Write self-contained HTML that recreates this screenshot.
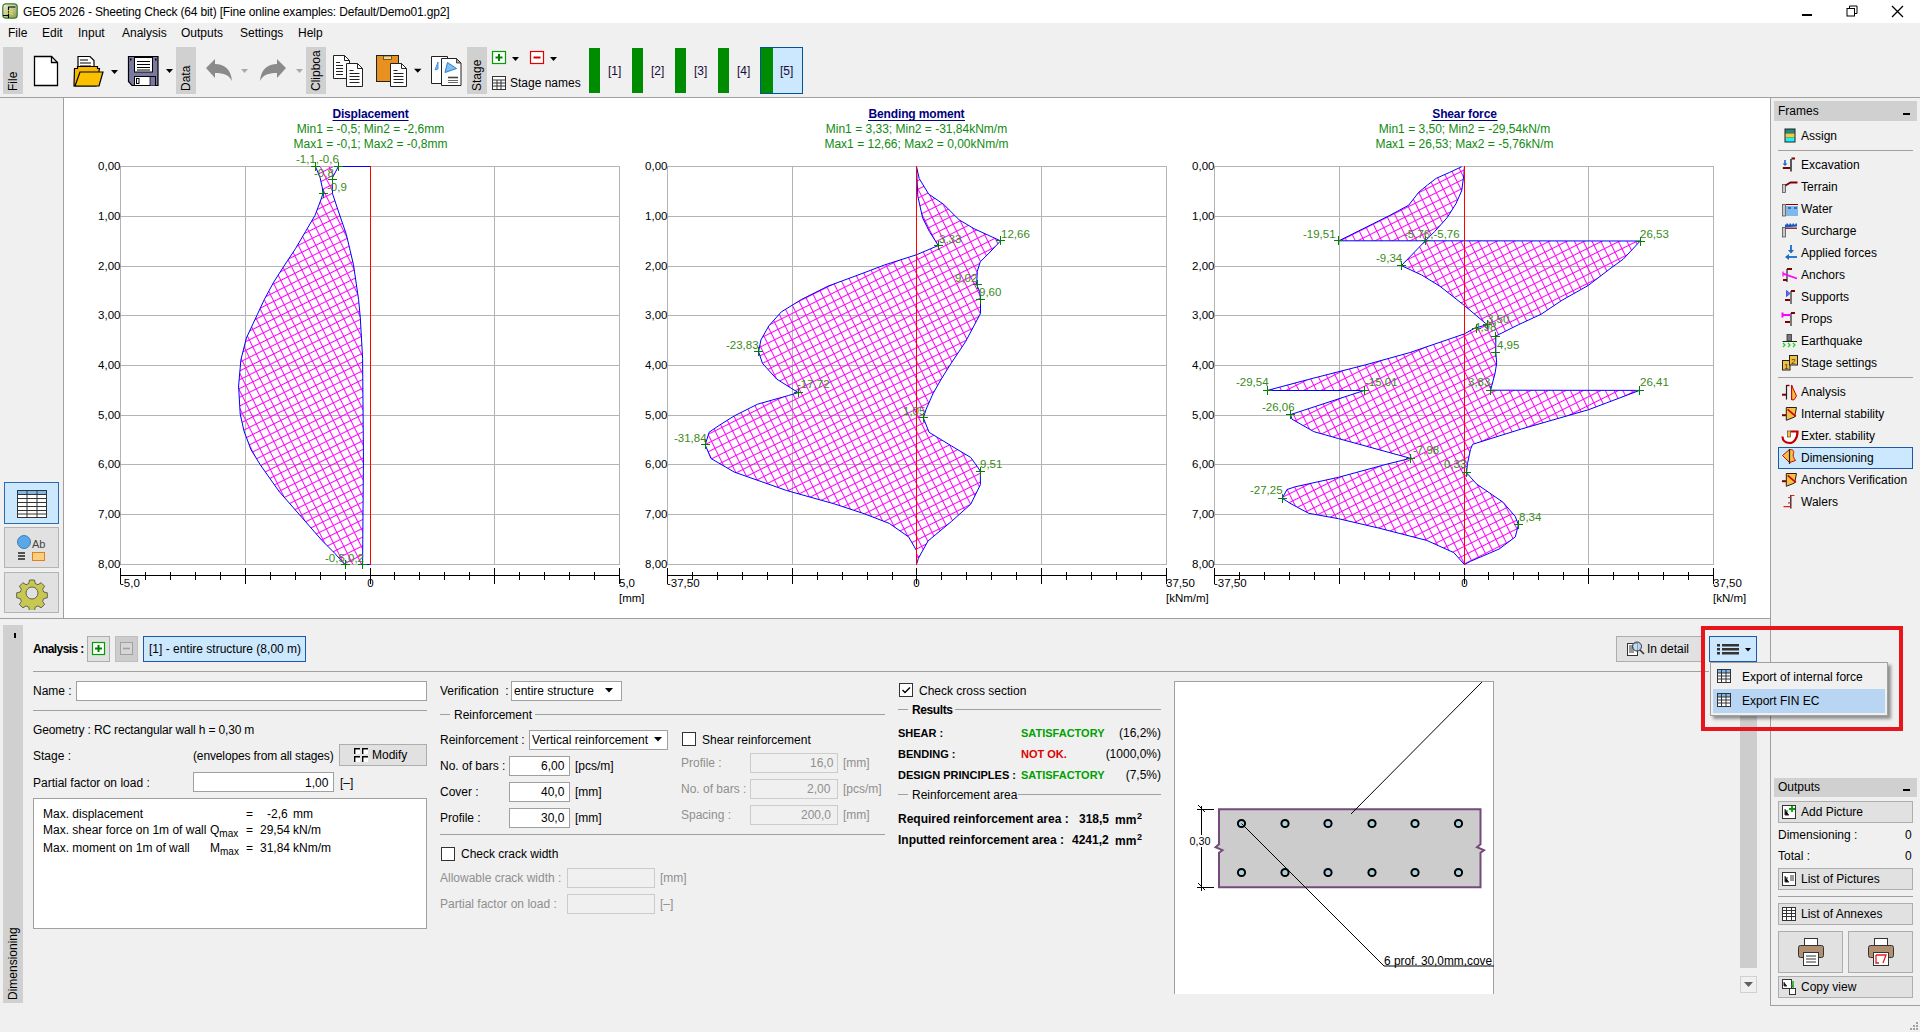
<!DOCTYPE html>
<html><head><meta charset="utf-8">
<style>
*{margin:0;padding:0;box-sizing:border-box}
html,body{width:1920px;height:1032px;overflow:hidden;background:#f0f0f0;font-family:"Liberation Sans",sans-serif;font-size:12px;color:#000}
.a{position:absolute}
.t{position:absolute;white-space:nowrap;line-height:14px}
.vt{position:absolute;background:#d0d0d0}
.vt span{position:absolute;left:3px;top:calc(100% - 3px);transform-origin:0 0;transform:rotate(-90deg);white-space:nowrap;font-size:12px;line-height:14px;width:auto}
.btn{position:absolute;background:#e1e1e1;border:1px solid #adadad}
.sel{position:absolute;background:#cce8ff;border:1px solid #005499}
.inp{position:absolute;background:#fff;border:1px solid #7a7a7a}
.dis{position:absolute;background:#f0f0f0;border:1px solid #cccccc}
.hl{position:absolute;height:1px;background:#a0a0a0}
.vl{position:absolute;width:1px;background:#a0a0a0}
.g{color:#8f8f8f}
.b{font-weight:bold}
</style></head><body>
<!-- title bar -->
<div class="a" style="left:0;top:0;width:1920px;height:23px;background:#fff"></div>
<svg class="a" style="left:2px;top:3px" width="16" height="16" viewBox="0 0 16 16"><defs><linearGradient id="lg" x1="0" y1="0" x2="1" y2="1"><stop offset="0" stop-color="#f4f4dc"/><stop offset="1" stop-color="#8a9a50"/></linearGradient></defs>
<rect x="0.8" y="0.8" width="14.4" height="14.4" rx="3" fill="url(#lg)" stroke="#3a7a2a" stroke-width="1.2"/>
<path d="M1 12.5h5.5M6.5 15v-11h7" stroke="#000" stroke-width="1.1" fill="none"/><path d="M5 8c2-1 4 0 6 1M5 10.5c2-1 4 0 6 1" stroke="#e8f020" stroke-width="1" fill="none"/></svg>
<div class="t" style="left:23px;top:5px;letter-spacing:-0.17px">GEO5 2026 - Sheeting Check (64 bit) [Fine online examples: Default/Demo01.gp2]</div>
<!-- menu -->
<div class="t" style="left:8px;top:26px">File</div>
<div class="t" style="left:42px;top:26px">Edit</div>
<div class="t" style="left:78px;top:26px">Input</div>
<div class="t" style="left:122px;top:26px">Analysis</div>
<div class="t" style="left:181px;top:26px">Outputs</div>
<div class="t" style="left:240px;top:26px">Settings</div>
<div class="t" style="left:298px;top:26px">Help</div>


<!-- toolbar -->
<div class="vt" style="left:3px;top:47px;width:20px;height:47px"><span>File</span></div>
<svg class="a" style="left:30px;top:52px" width="30" height="40" viewBox="0 0 30 40">
 <path d="M4.5 4.5h17l6 6v23h-23z" fill="#fff" stroke="#000" stroke-width="1.3"/><path d="M21.5 4.5v6h6" fill="none" stroke="#000" stroke-width="1.3"/></svg>
<svg class="a" style="left:72px;top:52px" width="50" height="40" viewBox="0 0 50 40">
 <path d="M6 4.5h12l4 4v16h-16z" fill="#fff" stroke="#000" stroke-width="1.2"/>
 <path d="M8 8h8M8 11h11M8 14h11" stroke="#000" stroke-width="1"/>
 <path d="M2.5 16.5h3v-2h20v2h2l-3.5 17.5h-22z" fill="#f8b800" stroke="#000" stroke-width="1.2"/>
 <path d="M3 34l5-14h23l-4 14z" fill="#fbc000" stroke="#000" stroke-width="1.2"/>
 <path d="M39 18h7l-3.5 4z" fill="#000"/></svg>
<svg class="a" style="left:126px;top:52px" width="50" height="40" viewBox="0 0 50 40">
 <path d="M2.5 4.5h29.5v29h-26l-3.5-4z" fill="#7a7aa0" stroke="#000" stroke-width="1.2"/>
 <rect x="4" y="6.5" width="1.5" height="2" fill="#000"/><rect x="29" y="6.5" width="1.5" height="2" fill="#000"/>
 <rect x="8.5" y="5.5" width="18" height="14.5" fill="#fff" stroke="#000" stroke-width="1"/>
 <path d="M11 9.5h13M11 12.5h13M11 15.5h13M11 18h13" stroke="#000" stroke-width="1"/>
 <rect x="8.5" y="24.5" width="21" height="9" fill="#fff" stroke="#000" stroke-width="1"/><rect x="10.5" y="26.5" width="2.5" height="5" fill="none" stroke="#000" stroke-width="1"/><rect x="24" y="25" width="5" height="8.5" fill="#7a7aa0"/><path d="M24 25v8.5" stroke="#000" stroke-width=".8"/>
 <path d="M40 17h7l-3.5 4z" fill="#000"/></svg>
<div class="vt" style="left:176px;top:47px;width:20px;height:47px"><span>Data</span></div>
<svg class="a" style="left:202px;top:55px" width="50" height="32" viewBox="0 0 50 32">
 <path d="M4 13l9-9v5c9 0 16 5 17 17-3-6-8-8-17-8v5z" fill="#8a8a8a"/>
 <path d="M39 14h7l-3.5 4z" fill="#aaa"/></svg>
<svg class="a" style="left:256px;top:55px" width="50" height="32" viewBox="0 0 50 32">
 <path d="M30 13l-9-9v5c-9 0-16 5-17 17 3-6 8-8 17-8v5z" fill="#8a8a8a"/>
 <path d="M40 14h7l-3.5 4z" fill="#aaa"/></svg>
<div class="vt" style="left:306px;top:47px;width:20px;height:47px"><span>Clipboa</span></div>
<svg class="a" style="left:330px;top:52px" width="36" height="40" viewBox="330 52 36 40">
 <path d="M333.5 55.5h11l5 5v18h-16z" fill="#fff" stroke="#222" stroke-width="1"/><path d="M344.5 55.5v5h5" fill="none" stroke="#222" stroke-width="1"/>
 <path d="M336 62.5h4M336 65.5h7M336 68.5h7M336 71.5h7M336 74.5h7" stroke="#222" stroke-width="1"/>
 <path d="M346.5 63.5h11l5 5v18h-16z" fill="#fff" stroke="#222" stroke-width="1"/><path d="M357.5 63.5v5h5" fill="none" stroke="#222" stroke-width="1"/>
 <path d="M349.5 70.5h4M349.5 73.5h10M349.5 76.5h10M349.5 79.5h10M349.5 82.5h10" stroke="#222" stroke-width="1"/></svg>
<svg class="a" style="left:374px;top:52px" width="50" height="40" viewBox="374 52 50 40">
 <rect x="376.5" y="55.5" width="22" height="26" fill="#e89020" stroke="#222" stroke-width="1"/><rect x="383.5" y="56" width="8" height="3.5" fill="#f8d880" stroke="#333" stroke-width=".7"/>
 <path d="M390.5 63.5h11l5 5v18h-16z" fill="#fff" stroke="#222" stroke-width="1"/><path d="M401.5 63.5v5h5" fill="none" stroke="#222" stroke-width="1"/>
 <path d="M393.5 70.5h4M393.5 73.5h10M393.5 76.5h10M393.5 79.5h10M393.5 82.5h10" stroke="#222" stroke-width="1"/>
 <path d="M414 68.8h7.5l-3.75 4z" fill="#000"/></svg>
<svg class="a" style="left:428px;top:52px" width="36" height="40" viewBox="428 52 36 40">
 <path d="M431.5 56.5h16v27h-16z" fill="#fff" stroke="#222" stroke-width="1"/><path d="M435 70l3-8v7z" fill="#80c0f0" stroke="#2a80d0" stroke-width=".8"/>
 <path d="M441.5 58.5h15l4.5 4.5v22.5h-19.5z" fill="#fff" stroke="#222" stroke-width="1"/><path d="M456.5 58.5v4.5h4.5z" fill="#aaa" stroke="#222" stroke-width=".8"/>
 <path d="M445 72.5l2.5-10 9 6z" fill="#80c0f0" stroke="#2a80d0" stroke-width="1"/>
 <path d="M448 77.5h10" stroke="#444" stroke-width="1.6"/><path d="M448 80.5h10M448 82.5h10" stroke="#444" stroke-width=".8"/></svg>
<div class="vt" style="left:467px;top:47px;width:20px;height:47px"><span>Stage</span></div>
<svg class="a" style="left:490px;top:49px" width="80" height="18" viewBox="0 0 80 18">
 <rect x="2.5" y="2.5" width="13" height="12" fill="#fff" stroke="#00a000" stroke-width="1.2"/><path d="M9 5v7M5.5 8.5h7" stroke="#008000" stroke-width="2"/>
 <path d="M22 8h7l-3.5 4z" fill="#000"/>
 <rect x="40.5" y="2.5" width="13" height="12" fill="#fff" stroke="#e00000" stroke-width="1.2"/><path d="M43.5 8.5h7" stroke="#d00000" stroke-width="2"/>
 <path d="M60 8h7l-3.5 4z" fill="#000"/></svg>
<svg class="a" style="left:491px;top:75px" width="16" height="16" viewBox="0 0 16 16">
 <rect x="1.5" y="1.5" width="13" height="13" fill="#fff" stroke="#333"/><path d="M1.5 5h13M1.5 8h13M1.5 11h13M6 5v9.5M10 5v9.5" stroke="#333"/></svg>
<div class="t" style="left:510px;top:76px">Stage names</div>
<div class="a" style="left:589px;top:48px;width:11px;height:45px;background:#008c00"></div>
<div class="t" style="left:608px;top:64px;color:#1a0a3a">[1]</div>
<div class="a" style="left:632px;top:48px;width:11px;height:45px;background:#008c00"></div>
<div class="t" style="left:651px;top:64px;color:#1a0a3a">[2]</div>
<div class="a" style="left:675px;top:48px;width:11px;height:45px;background:#008c00"></div>
<div class="t" style="left:694px;top:64px;color:#1a0a3a">[3]</div>
<div class="a" style="left:718px;top:48px;width:11px;height:45px;background:#008c00"></div>
<div class="t" style="left:737px;top:64px;color:#1a0a3a">[4]</div>
<div class="sel" style="left:760px;top:47px;width:43px;height:47px"></div>
<div class="a" style="left:761px;top:48px;width:12px;height:45px;background:#008c00"></div>
<div class="t" style="left:780px;top:64px;color:#1a0a3a">[5]</div>
<!-- window controls -->
<div class="a" style="left:1802px;top:14px;width:10px;height:2px;background:#000"></div>
<svg class="a" style="left:1846px;top:5px" width="12" height="12" viewBox="0 0 12 12"><path d="M3.5 3.5v-2.5h7.5v7.5h-2.5" fill="none" stroke="#000"/><rect x="1" y="3.5" width="7.5" height="7.5" fill="none" stroke="#000"/></svg>
<svg class="a" style="left:1891px;top:5px" width="13" height="13" viewBox="0 0 13 13"><path d="M1 1l11 11M12 1l-11 11" stroke="#000" stroke-width="1.3"/></svg>
<div class="hl" style="left:0;top:97px;width:1920px"></div>
<!-- left panel -->
<div class="vl" style="left:63px;top:98px;height:520px"></div>
<!-- chart area -->
<div class="a" style="left:64px;top:98px;width:1706px;height:520px;background:#fff"></div>
<!--CHARTS-->
<svg class="a" style="left:0;top:0" width="1920" height="620" viewBox="0 0 1920 620">
<defs>
<pattern id="hatch" patternUnits="userSpaceOnUse" width="7.83" height="7.83" patternTransform="rotate(-26.57)">
<path d="M0 0.5H7.83M0.5 0V7.83" stroke="#ff00ff" stroke-width="1" shape-rendering="crispEdges"/>
</pattern>
<style>
.yl{font-family:"Liberation Sans",sans-serif;font-size:11.5px;fill:#000}
.lb{font-family:"Liberation Sans",sans-serif;font-size:11.5px;fill:#3a8a1a}
.mm{font-family:"Liberation Sans",sans-serif;font-size:12px;fill:#108a10}
.tt{font-family:"Liberation Sans",sans-serif;font-size:12px;font-weight:bold;fill:#000080;letter-spacing:-0.15px}
</style>
</defs>
<line x1="120" y1="166.5" x2="620" y2="166.5" stroke="#b4b4b4" stroke-width="1"/>
<line x1="120" y1="216.5" x2="620" y2="216.5" stroke="#b4b4b4" stroke-width="1"/>
<line x1="120" y1="266.5" x2="620" y2="266.5" stroke="#b4b4b4" stroke-width="1"/>
<line x1="120" y1="315.5" x2="620" y2="315.5" stroke="#b4b4b4" stroke-width="1"/>
<line x1="120" y1="365.5" x2="620" y2="365.5" stroke="#b4b4b4" stroke-width="1"/>
<line x1="120" y1="415.5" x2="620" y2="415.5" stroke="#b4b4b4" stroke-width="1"/>
<line x1="120" y1="464.5" x2="620" y2="464.5" stroke="#b4b4b4" stroke-width="1"/>
<line x1="120" y1="514.5" x2="620" y2="514.5" stroke="#b4b4b4" stroke-width="1"/>
<line x1="120" y1="564.5" x2="620" y2="564.5" stroke="#b4b4b4" stroke-width="1"/>
<line x1="120.5" y1="166" x2="120.5" y2="565" stroke="#b4b4b4" stroke-width="1"/>
<line x1="245.5" y1="166" x2="245.5" y2="565" stroke="#b4b4b4" stroke-width="1"/>
<line x1="370.5" y1="166" x2="370.5" y2="565" stroke="#b4b4b4" stroke-width="1"/>
<line x1="494.5" y1="166" x2="494.5" y2="565" stroke="#b4b4b4" stroke-width="1"/>
<line x1="619.5" y1="166" x2="619.5" y2="565" stroke="#b4b4b4" stroke-width="1"/>
<text x="120.5" y="170" text-anchor="end" class="yl">0,00</text>
<text x="120.5" y="220" text-anchor="end" class="yl">1,00</text>
<text x="120.5" y="270" text-anchor="end" class="yl">2,00</text>
<text x="120.5" y="319" text-anchor="end" class="yl">3,00</text>
<text x="120.5" y="369" text-anchor="end" class="yl">4,00</text>
<text x="120.5" y="419" text-anchor="end" class="yl">5,00</text>
<text x="120.5" y="468" text-anchor="end" class="yl">6,00</text>
<text x="120.5" y="518" text-anchor="end" class="yl">7,00</text>
<text x="120.5" y="568" text-anchor="end" class="yl">8,00</text>
<polygon points="338.3,166.7 332.5,177.6 332.5,193.6 338.3,211.0 346.3,234.3 353.5,264.8 358.6,299.7 360.3,317.9 362.6,358.2 363.4,450.0 363.4,464.0 362.6,564.5 344.8,564.5 334.7,553.2 322.3,540.8 300.6,516.0 278.9,491.2 260.3,464.8 251.0,449.7 244.0,431.0 240.2,414.0 238.6,386.0 240.9,359.8 246.4,338.0 257.2,314.8 264.2,299.7 273.6,282.3 283.8,266.3 295.4,248.8 305.6,231.4 315.0,215.4 320.8,200.0 323.0,193.6 322.3,187.8 320.1,177.6 315.5,166.7" fill="url(#hatch)" stroke="none"/>
<polyline points="338.3,166.7 332.5,177.6 332.5,193.6 338.3,211.0 346.3,234.3 353.5,264.8 358.6,299.7 360.3,317.9 362.6,358.2 363.4,450.0 363.4,464.0 362.6,564.5" fill="none" stroke="#0000ff" stroke-width="1"/>
<polyline points="315.5,166.7 320.1,177.6 322.3,187.8 323.0,193.6 320.8,200.0 315.0,215.4 305.6,231.4 295.4,248.8 283.8,266.3 273.6,282.3 264.2,299.7 257.2,314.8 246.4,338.0 240.9,359.8 238.6,386.0 240.2,414.0 244.0,431.0 251.0,449.7 260.3,464.8 278.9,491.2 300.6,516.0 322.3,540.8 334.7,553.2 344.8,564.5" fill="none" stroke="#0000ff" stroke-width="1"/>
<polyline points="338.3,166.5 370.0,166.5" fill="none" stroke="#0000ff" stroke-width="1"/>
<polyline points="362.6,564.5 370.0,564.5" fill="none" stroke="#0000ff" stroke-width="1"/>
<line x1="370.5" y1="166" x2="370.5" y2="565" stroke="#ff0000" stroke-width="1"/>
<path d="M311 166.5h9M315.5 162v9" stroke="#008000" stroke-width="1"/>
<path d="M334 166.5h9M338.5 162v9" stroke="#008000" stroke-width="1"/>
<path d="M328 179.5h9M332.5 175v9" stroke="#008000" stroke-width="1"/>
<path d="M319 193.5h9M323.5 189v9" stroke="#008000" stroke-width="1"/>
<path d="M341 564.5h9M345.5 560v9" stroke="#008000" stroke-width="1"/>
<path d="M358 564.5h9M362.5 560v9" stroke="#008000" stroke-width="1"/>
<text x="296" y="163" class="lb">-1,1,-0,6</text>
<text x="314" y="177" class="lb">-0,8</text>
<text x="327" y="191" class="lb">-0,9</text>
<text x="325" y="562" class="lb">-0,5,0,2</text>
<line x1="120" y1="575.5" x2="620" y2="575.5" stroke="#000" stroke-width="1"/>
<line x1="120.5" y1="568" x2="120.5" y2="584" stroke="#000" stroke-width="1"/>
<line x1="145.5" y1="572" x2="145.5" y2="580" stroke="#000" stroke-width="1"/>
<line x1="170.5" y1="572" x2="170.5" y2="580" stroke="#000" stroke-width="1"/>
<line x1="195.5" y1="572" x2="195.5" y2="580" stroke="#000" stroke-width="1"/>
<line x1="220.5" y1="572" x2="220.5" y2="580" stroke="#000" stroke-width="1"/>
<line x1="245.5" y1="568" x2="245.5" y2="584" stroke="#000" stroke-width="1"/>
<line x1="270.5" y1="572" x2="270.5" y2="580" stroke="#000" stroke-width="1"/>
<line x1="295.5" y1="572" x2="295.5" y2="580" stroke="#000" stroke-width="1"/>
<line x1="320.5" y1="572" x2="320.5" y2="580" stroke="#000" stroke-width="1"/>
<line x1="345.5" y1="572" x2="345.5" y2="580" stroke="#000" stroke-width="1"/>
<line x1="370.5" y1="568" x2="370.5" y2="584" stroke="#000" stroke-width="1"/>
<line x1="394.5" y1="572" x2="394.5" y2="580" stroke="#000" stroke-width="1"/>
<line x1="419.5" y1="572" x2="419.5" y2="580" stroke="#000" stroke-width="1"/>
<line x1="444.5" y1="572" x2="444.5" y2="580" stroke="#000" stroke-width="1"/>
<line x1="469.5" y1="572" x2="469.5" y2="580" stroke="#000" stroke-width="1"/>
<line x1="494.5" y1="568" x2="494.5" y2="584" stroke="#000" stroke-width="1"/>
<line x1="519.5" y1="572" x2="519.5" y2="580" stroke="#000" stroke-width="1"/>
<line x1="544.5" y1="572" x2="544.5" y2="580" stroke="#000" stroke-width="1"/>
<line x1="569.5" y1="572" x2="569.5" y2="580" stroke="#000" stroke-width="1"/>
<line x1="594.5" y1="572" x2="594.5" y2="580" stroke="#000" stroke-width="1"/>
<line x1="619.5" y1="568" x2="619.5" y2="584" stroke="#000" stroke-width="1"/>
<text x="120" y="586.5" class="yl">-5,0</text>
<text x="370.5" y="586.5" text-anchor="middle" class="yl">0</text>
<text x="619" y="586.5" class="yl">5,0</text>
<text x="619" y="601.5" class="yl">[mm]</text>
<text x="370.5" y="118" text-anchor="middle" class="tt">Displacement</text>
<line x1="332.5" y1="120.5" x2="408.5" y2="120.5" stroke="#000080" stroke-width="1"/>
<text x="370.5" y="133" text-anchor="middle" class="mm">Min1 = -0,5; Min2 = -2,6mm</text>
<text x="370.5" y="148" text-anchor="middle" class="mm">Max1 = -0,1; Max2 = -0,8mm</text>
<line x1="667" y1="166.5" x2="1167" y2="166.5" stroke="#b4b4b4" stroke-width="1"/>
<line x1="667" y1="216.5" x2="1167" y2="216.5" stroke="#b4b4b4" stroke-width="1"/>
<line x1="667" y1="266.5" x2="1167" y2="266.5" stroke="#b4b4b4" stroke-width="1"/>
<line x1="667" y1="315.5" x2="1167" y2="315.5" stroke="#b4b4b4" stroke-width="1"/>
<line x1="667" y1="365.5" x2="1167" y2="365.5" stroke="#b4b4b4" stroke-width="1"/>
<line x1="667" y1="415.5" x2="1167" y2="415.5" stroke="#b4b4b4" stroke-width="1"/>
<line x1="667" y1="464.5" x2="1167" y2="464.5" stroke="#b4b4b4" stroke-width="1"/>
<line x1="667" y1="514.5" x2="1167" y2="514.5" stroke="#b4b4b4" stroke-width="1"/>
<line x1="667" y1="564.5" x2="1167" y2="564.5" stroke="#b4b4b4" stroke-width="1"/>
<line x1="667.5" y1="166" x2="667.5" y2="565" stroke="#b4b4b4" stroke-width="1"/>
<line x1="792.5" y1="166" x2="792.5" y2="565" stroke="#b4b4b4" stroke-width="1"/>
<line x1="916.5" y1="166" x2="916.5" y2="565" stroke="#b4b4b4" stroke-width="1"/>
<line x1="1041.5" y1="166" x2="1041.5" y2="565" stroke="#b4b4b4" stroke-width="1"/>
<line x1="1166.5" y1="166" x2="1166.5" y2="565" stroke="#b4b4b4" stroke-width="1"/>
<text x="667.5" y="170" text-anchor="end" class="yl">0,00</text>
<text x="667.5" y="220" text-anchor="end" class="yl">1,00</text>
<text x="667.5" y="270" text-anchor="end" class="yl">2,00</text>
<text x="667.5" y="319" text-anchor="end" class="yl">3,00</text>
<text x="667.5" y="369" text-anchor="end" class="yl">4,00</text>
<text x="667.5" y="419" text-anchor="end" class="yl">5,00</text>
<text x="667.5" y="468" text-anchor="end" class="yl">6,00</text>
<text x="667.5" y="518" text-anchor="end" class="yl">7,00</text>
<text x="667.5" y="568" text-anchor="end" class="yl">8,00</text>
<polygon points="916.5,166.6 919.2,178.5 928.7,194.1 943.6,204.3 959.2,219.9 974.1,228.7 1000.6,240.9 989.0,253.1 980.2,261.9 977.3,271.3 976.6,284.5 979.7,291.6 980.5,299.4 980.5,313.4 965.6,341.6 950.0,365.0 940.7,380.0 933.0,393.6 926.2,409.1 923.3,417.8 929.1,432.3 951.4,445.9 970.8,457.5 980.4,471.1 980.4,484.7 970.8,504.1 951.4,521.5 928.1,540.9 918.4,558.3 916.5,564.5 916.5,564.5 916.5,550.6 908.7,537.0 889.3,523.4 864.1,513.7 835.1,504.1 786.6,490.5 734.3,472.1 711.0,458.5 705.2,444.9 709.1,432.3 718.8,425.6 734.3,415.9 757.5,404.2 788.5,395.5 798.2,392.6 776.6,379.0 762.5,363.4 758.6,351.7 760.9,340.0 768.8,325.9 781.3,311.9 801.6,299.4 828.1,286.1 864.0,272.8 884.4,265.0 916.4,254.8 938.3,245.5 929.3,231.4 922.6,217.8 917.8,196.1 916.5,166.6" fill="url(#hatch)" stroke="none"/>
<polyline points="916.5,166.6 919.2,178.5 928.7,194.1 943.6,204.3 959.2,219.9 974.1,228.7 1000.6,240.9 989.0,253.1 980.2,261.9 977.3,271.3 976.6,284.5 979.7,291.6 980.5,299.4 980.5,313.4 965.6,341.6 950.0,365.0 940.7,380.0 933.0,393.6 926.2,409.1 923.3,417.8 929.1,432.3 951.4,445.9 970.8,457.5 980.4,471.1 980.4,484.7 970.8,504.1 951.4,521.5 928.1,540.9 918.4,558.3 916.5,564.5" fill="none" stroke="#0000ff" stroke-width="1"/>
<polyline points="916.5,166.6 917.8,196.1 922.6,217.8 929.3,231.4 938.3,245.5 916.4,254.8 884.4,265.0 864.0,272.8 828.1,286.1 801.6,299.4 781.3,311.9 768.8,325.9 760.9,340.0 758.6,351.7 762.5,363.4 776.6,379.0 798.2,392.6 788.5,395.5 757.5,404.2 734.3,415.9 718.8,425.6 709.1,432.3 705.2,444.9 711.0,458.5 734.3,472.1 786.6,490.5 835.1,504.1 864.1,513.7 889.3,523.4 908.7,537.0 916.5,550.6 916.5,564.5" fill="none" stroke="#0000ff" stroke-width="1"/>
<line x1="916.5" y1="166" x2="916.5" y2="565" stroke="#ff0000" stroke-width="1"/>
<path d="M996 240.5h9M1000.5 236v9" stroke="#008000" stroke-width="1"/>
<path d="M934 245.5h9M938.5 241v9" stroke="#008000" stroke-width="1"/>
<path d="M973 284.5h9M977.5 280v9" stroke="#008000" stroke-width="1"/>
<path d="M976 299.5h9M980.5 295v9" stroke="#008000" stroke-width="1"/>
<path d="M754 351.5h9M758.5 347v9" stroke="#008000" stroke-width="1"/>
<path d="M794 392.5h9M798.5 388v9" stroke="#008000" stroke-width="1"/>
<path d="M919 417.5h9M923.5 413v9" stroke="#008000" stroke-width="1"/>
<path d="M701 444.5h9M705.5 440v9" stroke="#008000" stroke-width="1"/>
<path d="M976 471.5h9M980.5 467v9" stroke="#008000" stroke-width="1"/>
<text x="1001" y="238" class="lb">12,66</text>
<text x="939" y="243" class="lb">3,33</text>
<text x="955" y="282" class="lb">9,02</text>
<text x="979" y="296" class="lb">9,60</text>
<text x="726" y="349" class="lb">-23,83</text>
<text x="797" y="388" class="lb">-17,72</text>
<text x="903" y="415" class="lb">1,05</text>
<text x="674" y="442" class="lb">-31,84</text>
<text x="980" y="468" class="lb">9,51</text>
<line x1="667" y1="575.5" x2="1167" y2="575.5" stroke="#000" stroke-width="1"/>
<line x1="667.5" y1="568" x2="667.5" y2="584" stroke="#000" stroke-width="1"/>
<line x1="692.5" y1="572" x2="692.5" y2="580" stroke="#000" stroke-width="1"/>
<line x1="717.5" y1="572" x2="717.5" y2="580" stroke="#000" stroke-width="1"/>
<line x1="742.5" y1="572" x2="742.5" y2="580" stroke="#000" stroke-width="1"/>
<line x1="767.5" y1="572" x2="767.5" y2="580" stroke="#000" stroke-width="1"/>
<line x1="792.5" y1="568" x2="792.5" y2="584" stroke="#000" stroke-width="1"/>
<line x1="817.5" y1="572" x2="817.5" y2="580" stroke="#000" stroke-width="1"/>
<line x1="842.5" y1="572" x2="842.5" y2="580" stroke="#000" stroke-width="1"/>
<line x1="867.5" y1="572" x2="867.5" y2="580" stroke="#000" stroke-width="1"/>
<line x1="892.5" y1="572" x2="892.5" y2="580" stroke="#000" stroke-width="1"/>
<line x1="916.5" y1="568" x2="916.5" y2="584" stroke="#000" stroke-width="1"/>
<line x1="941.5" y1="572" x2="941.5" y2="580" stroke="#000" stroke-width="1"/>
<line x1="966.5" y1="572" x2="966.5" y2="580" stroke="#000" stroke-width="1"/>
<line x1="991.5" y1="572" x2="991.5" y2="580" stroke="#000" stroke-width="1"/>
<line x1="1016.5" y1="572" x2="1016.5" y2="580" stroke="#000" stroke-width="1"/>
<line x1="1041.5" y1="568" x2="1041.5" y2="584" stroke="#000" stroke-width="1"/>
<line x1="1066.5" y1="572" x2="1066.5" y2="580" stroke="#000" stroke-width="1"/>
<line x1="1091.5" y1="572" x2="1091.5" y2="580" stroke="#000" stroke-width="1"/>
<line x1="1116.5" y1="572" x2="1116.5" y2="580" stroke="#000" stroke-width="1"/>
<line x1="1141.5" y1="572" x2="1141.5" y2="580" stroke="#000" stroke-width="1"/>
<line x1="1166.5" y1="568" x2="1166.5" y2="584" stroke="#000" stroke-width="1"/>
<text x="667" y="586.5" class="yl">-37,50</text>
<text x="916.5" y="586.5" text-anchor="middle" class="yl">0</text>
<text x="1166" y="586.5" class="yl">37,50</text>
<text x="1166" y="601.5" class="yl">[kNm/m]</text>
<text x="916.5" y="118" text-anchor="middle" class="tt">Bending moment</text>
<line x1="868.0" y1="120.5" x2="965.0" y2="120.5" stroke="#000080" stroke-width="1"/>
<text x="916.5" y="133" text-anchor="middle" class="mm">Min1 = 3,33; Min2 = -31,84kNm/m</text>
<text x="916.5" y="148" text-anchor="middle" class="mm">Max1 = 12,66; Max2 = 0,00kNm/m</text>
<line x1="1214" y1="166.5" x2="1714" y2="166.5" stroke="#b4b4b4" stroke-width="1"/>
<line x1="1214" y1="216.5" x2="1714" y2="216.5" stroke="#b4b4b4" stroke-width="1"/>
<line x1="1214" y1="266.5" x2="1714" y2="266.5" stroke="#b4b4b4" stroke-width="1"/>
<line x1="1214" y1="315.5" x2="1714" y2="315.5" stroke="#b4b4b4" stroke-width="1"/>
<line x1="1214" y1="365.5" x2="1714" y2="365.5" stroke="#b4b4b4" stroke-width="1"/>
<line x1="1214" y1="415.5" x2="1714" y2="415.5" stroke="#b4b4b4" stroke-width="1"/>
<line x1="1214" y1="464.5" x2="1714" y2="464.5" stroke="#b4b4b4" stroke-width="1"/>
<line x1="1214" y1="514.5" x2="1714" y2="514.5" stroke="#b4b4b4" stroke-width="1"/>
<line x1="1214" y1="564.5" x2="1714" y2="564.5" stroke="#b4b4b4" stroke-width="1"/>
<line x1="1214.5" y1="166" x2="1214.5" y2="565" stroke="#b4b4b4" stroke-width="1"/>
<line x1="1339.5" y1="166" x2="1339.5" y2="565" stroke="#b4b4b4" stroke-width="1"/>
<line x1="1464.5" y1="166" x2="1464.5" y2="565" stroke="#b4b4b4" stroke-width="1"/>
<line x1="1588.5" y1="166" x2="1588.5" y2="565" stroke="#b4b4b4" stroke-width="1"/>
<line x1="1713.5" y1="166" x2="1713.5" y2="565" stroke="#b4b4b4" stroke-width="1"/>
<text x="1214.5" y="170" text-anchor="end" class="yl">0,00</text>
<text x="1214.5" y="220" text-anchor="end" class="yl">1,00</text>
<text x="1214.5" y="270" text-anchor="end" class="yl">2,00</text>
<text x="1214.5" y="319" text-anchor="end" class="yl">3,00</text>
<text x="1214.5" y="369" text-anchor="end" class="yl">4,00</text>
<text x="1214.5" y="419" text-anchor="end" class="yl">5,00</text>
<text x="1214.5" y="468" text-anchor="end" class="yl">6,00</text>
<text x="1214.5" y="518" text-anchor="end" class="yl">7,00</text>
<text x="1214.5" y="568" text-anchor="end" class="yl">8,00</text>
<polygon points="1464.4,166.7 1463.9,174.7 1461.7,190.7 1455.9,203.8 1447.2,217.6 1434.8,231.4 1425.4,240.8 1640.2,241.0 1623.2,259.2 1611.0,268.0 1588.3,285.4 1562.1,300.2 1541.2,314.2 1518.5,324.7 1495.8,336.0 1495.8,352.6 1496.7,363.0 1495.0,373.5 1490.6,390.2 1639.6,390.4 1588.6,409.7 1521.4,429.0 1472.6,444.3 1470.5,449.4 1467.5,463.6 1466.5,472.8 1476.6,484.0 1503.1,502.3 1515.3,516.6 1518.4,524.7 1515.3,536.9 1499.0,549.1 1470.5,561.3 1464.4,564.5 1464.4,564.5 1453.8,552.6 1426.7,540.4 1379.2,528.2 1338.5,518.7 1308.7,513.3 1291.0,503.8 1282.2,498.3 1287.0,489.5 1295.1,486.8 1338.5,477.3 1386.0,464.4 1410.4,458.3 1338.5,438.6 1313.7,431.6 1292.0,419.2 1290.5,414.6 1364.1,390.5 1267.2,390.5 1307.5,379.7 1364.9,365.0 1409.8,352.6 1464.1,334.0 1474.9,328.1 1487.1,324.7 1464.4,305.5 1440.0,286.3 1421.7,275.0 1401.4,265.6 1425.4,240.8 1338.9,240.8 1373.8,223.4 1389.8,215.4 1408.7,205.2 1418.8,192.2 1427.6,184.9 1436.3,178.3 1449.4,172.5 1461.7,166.7" fill="url(#hatch)" stroke="none"/>
<polyline points="1464.4,166.7 1463.9,174.7 1461.7,190.7 1455.9,203.8 1447.2,217.6 1434.8,231.4 1425.4,240.8 1640.2,241.0 1623.2,259.2 1611.0,268.0 1588.3,285.4 1562.1,300.2 1541.2,314.2 1518.5,324.7 1495.8,336.0 1495.8,352.6 1496.7,363.0 1495.0,373.5 1490.6,390.2 1639.6,390.4 1588.6,409.7 1521.4,429.0 1472.6,444.3 1470.5,449.4 1467.5,463.6 1466.5,472.8 1476.6,484.0 1503.1,502.3 1515.3,516.6 1518.4,524.7 1515.3,536.9 1499.0,549.1 1470.5,561.3 1464.4,564.5" fill="none" stroke="#0000ff" stroke-width="1"/>
<polyline points="1461.7,166.7 1449.4,172.5 1436.3,178.3 1427.6,184.9 1418.8,192.2 1408.7,205.2 1389.8,215.4 1373.8,223.4 1338.9,240.8 1425.4,240.8 1401.4,265.6 1421.7,275.0 1440.0,286.3 1464.4,305.5 1487.1,324.7 1474.9,328.1 1464.1,334.0 1409.8,352.6 1364.9,365.0 1307.5,379.7 1267.2,390.5 1364.1,390.5 1290.5,414.6 1292.0,419.2 1313.7,431.6 1338.5,438.6 1410.4,458.3 1386.0,464.4 1338.5,477.3 1295.1,486.8 1287.0,489.5 1282.2,498.3 1291.0,503.8 1308.7,513.3 1338.5,518.7 1379.2,528.2 1426.7,540.4 1453.8,552.6 1464.4,564.5" fill="none" stroke="#0000ff" stroke-width="1"/>
<line x1="1464.5" y1="166" x2="1464.5" y2="565" stroke="#ff0000" stroke-width="1"/>
<path d="M1636 241.5h9M1640.5 237v9" stroke="#008000" stroke-width="1"/>
<path d="M1334 240.5h9M1338.5 236v9" stroke="#008000" stroke-width="1"/>
<path d="M1421 240.5h9M1425.5 236v9" stroke="#008000" stroke-width="1"/>
<path d="M1397 265.5h9M1401.5 261v9" stroke="#008000" stroke-width="1"/>
<path d="M1483 324.5h9M1487.5 320v9" stroke="#008000" stroke-width="1"/>
<path d="M1472 328.5h9M1476.5 324v9" stroke="#008000" stroke-width="1"/>
<path d="M1491 336.5h9M1495.5 332v9" stroke="#008000" stroke-width="1"/>
<path d="M1491 352.5h9M1495.5 348v9" stroke="#008000" stroke-width="1"/>
<path d="M1263 390.5h9M1267.5 386v9" stroke="#008000" stroke-width="1"/>
<path d="M1360 390.5h9M1364.5 386v9" stroke="#008000" stroke-width="1"/>
<path d="M1486 390.5h9M1490.5 386v9" stroke="#008000" stroke-width="1"/>
<path d="M1635 390.5h9M1639.5 386v9" stroke="#008000" stroke-width="1"/>
<path d="M1286 414.5h9M1290.5 410v9" stroke="#008000" stroke-width="1"/>
<path d="M1406 458.5h9M1410.5 454v9" stroke="#008000" stroke-width="1"/>
<path d="M1462 472.5h9M1466.5 468v9" stroke="#008000" stroke-width="1"/>
<path d="M1278 498.5h9M1282.5 494v9" stroke="#008000" stroke-width="1"/>
<path d="M1514 524.5h9M1518.5 520v9" stroke="#008000" stroke-width="1"/>
<text x="1640" y="238" class="lb">26,53</text>
<text x="1303" y="238" class="lb">-19,51</text>
<text x="1404" y="238" class="lb">-5,76,-5,76</text>
<text x="1376" y="262" class="lb">-9,34</text>
<text x="1487" y="323" class="lb">3,50</text>
<text x="1474" y="331" class="lb">4,98</text>
<text x="1497" y="349" class="lb">4,95</text>
<text x="1236" y="386" class="lb">-29,54</text>
<text x="1365" y="386" class="lb">-15,01</text>
<text x="1468" y="386" class="lb">3,83</text>
<text x="1640" y="386" class="lb">26,41</text>
<text x="1262" y="411" class="lb">-26,06</text>
<text x="1413" y="454" class="lb">-7,98</text>
<text x="1444" y="468" class="lb">0,33</text>
<text x="1250" y="494" class="lb">-27,25</text>
<text x="1519" y="521" class="lb">8,34</text>
<line x1="1214" y1="575.5" x2="1714" y2="575.5" stroke="#000" stroke-width="1"/>
<line x1="1214.5" y1="568" x2="1214.5" y2="584" stroke="#000" stroke-width="1"/>
<line x1="1239.5" y1="572" x2="1239.5" y2="580" stroke="#000" stroke-width="1"/>
<line x1="1264.5" y1="572" x2="1264.5" y2="580" stroke="#000" stroke-width="1"/>
<line x1="1289.5" y1="572" x2="1289.5" y2="580" stroke="#000" stroke-width="1"/>
<line x1="1314.5" y1="572" x2="1314.5" y2="580" stroke="#000" stroke-width="1"/>
<line x1="1339.5" y1="568" x2="1339.5" y2="584" stroke="#000" stroke-width="1"/>
<line x1="1364.5" y1="572" x2="1364.5" y2="580" stroke="#000" stroke-width="1"/>
<line x1="1389.5" y1="572" x2="1389.5" y2="580" stroke="#000" stroke-width="1"/>
<line x1="1414.5" y1="572" x2="1414.5" y2="580" stroke="#000" stroke-width="1"/>
<line x1="1439.5" y1="572" x2="1439.5" y2="580" stroke="#000" stroke-width="1"/>
<line x1="1464.5" y1="568" x2="1464.5" y2="584" stroke="#000" stroke-width="1"/>
<line x1="1488.5" y1="572" x2="1488.5" y2="580" stroke="#000" stroke-width="1"/>
<line x1="1513.5" y1="572" x2="1513.5" y2="580" stroke="#000" stroke-width="1"/>
<line x1="1538.5" y1="572" x2="1538.5" y2="580" stroke="#000" stroke-width="1"/>
<line x1="1563.5" y1="572" x2="1563.5" y2="580" stroke="#000" stroke-width="1"/>
<line x1="1588.5" y1="568" x2="1588.5" y2="584" stroke="#000" stroke-width="1"/>
<line x1="1613.5" y1="572" x2="1613.5" y2="580" stroke="#000" stroke-width="1"/>
<line x1="1638.5" y1="572" x2="1638.5" y2="580" stroke="#000" stroke-width="1"/>
<line x1="1663.5" y1="572" x2="1663.5" y2="580" stroke="#000" stroke-width="1"/>
<line x1="1688.5" y1="572" x2="1688.5" y2="580" stroke="#000" stroke-width="1"/>
<line x1="1713.5" y1="568" x2="1713.5" y2="584" stroke="#000" stroke-width="1"/>
<text x="1214" y="586.5" class="yl">-37,50</text>
<text x="1464.5" y="586.5" text-anchor="middle" class="yl">0</text>
<text x="1713" y="586.5" class="yl">37,50</text>
<text x="1713" y="601.5" class="yl">[kN/m]</text>
<text x="1464.5" y="118" text-anchor="middle" class="tt">Shear force</text>
<line x1="1431.5" y1="120.5" x2="1497.5" y2="120.5" stroke="#000080" stroke-width="1"/>
<text x="1464.5" y="133" text-anchor="middle" class="mm">Min1 = 3,50; Min2 = -29,54kN/m</text>
<text x="1464.5" y="148" text-anchor="middle" class="mm">Max1 = 26,53; Max2 = -5,76kN/m</text>
</svg>
<!--/CHARTS-->
<div class="hl" style="left:0;top:618px;width:1771px"></div>
<div class="vl" style="left:1770px;top:98px;height:907px"></div>
<div class="hl" style="left:1770px;top:1005px;width:150px"></div>

<!-- left panel buttons -->
<div class="sel" style="left:4px;top:482px;width:55px;height:42px;border-color:#2a6ab0"></div>
<svg class="a" style="left:16px;top:489px" width="32" height="30" viewBox="0 0 32 30">
 <rect x="1.5" y="1.5" width="29" height="27" fill="#fff" stroke="#333"/><rect x="2" y="2" width="28" height="3.5" fill="#7ab8ec"/>
 <path d="M1.5 5.5h29M1.5 9.5h29M1.5 13.5h29M1.5 17.5h29M1.5 21.5h29M1.5 25h29M11 1.5v27M21 1.5v27" stroke="#333"/></svg>
<div class="btn" style="left:4px;top:527px;width:55px;height:41px;background:#e1e1e1;border-color:#b4b4b4"></div>
<svg class="a" style="left:14px;top:533px" width="36" height="30" viewBox="0 0 36 30">
 <circle cx="10" cy="9" r="6.5" fill="#5aa8e8" stroke="#2a6ab0" stroke-width=".8"/>
 <text x="18" y="15" font-family="Liberation Sans" font-size="11" fill="#444">Ab</text>
 <path d="M4 20h7M4 23h7M4 26h7" stroke="#222" stroke-width="1.6"/>
 <rect x="18.5" y="19.5" width="12" height="8" fill="#f8d080" stroke="#e08020"/></svg>
<div class="btn" style="left:4px;top:572px;width:55px;height:41px;background:#e1e1e1;border-color:#b4b4b4"></div>
<svg class="a" style="left:15px;top:576px" width="34" height="34" viewBox="0 0 34 34">
 <path d="M14.5 4h5l.8 3.6 2.7 1.1 3.1-2 3.5 3.5-2 3.1 1.1 2.7 3.6.8v5l-3.6.8-1.1 2.7 2 3.1-3.5 3.5-3.1-2-2.7 1.1-.8 3.6h-5l-.8-3.6-2.7-1.1-3.1 2-3.5-3.5 2-3.1-1.1-2.7-3.6-.8v-5l3.6-.8 1.1-2.7-2-3.1 3.5-3.5 3.1 2 2.7-1.1z" fill="#c8c850" stroke="#555" stroke-width=".9"/>
 <circle cx="17" cy="17" r="6" fill="#e1e1e1" stroke="#555" stroke-width=".9"/></svg>

<!-- right panel -->
<div class="a" style="left:1774px;top:101px;width:143px;height:20px;background:#d0d0d0"></div>
<div class="t" style="left:1778px;top:104px">Frames</div>
<div class="a" style="left:1903px;top:113px;width:7px;height:2px;background:#000"></div>
<div class="hl" style="left:1778px;top:150px;width:135px"></div>
<div class="hl" style="left:1778px;top:377px;width:135px"></div>
<div class="sel" style="left:1778px;top:447px;width:135px;height:22px;border-color:#1a5aa8"></div>
<div class="t" style="left:1801px;top:129px">Assign</div>
<div class="t" style="left:1801px;top:158px">Excavation</div>
<div class="t" style="left:1801px;top:180px">Terrain</div>
<div class="t" style="left:1801px;top:202px">Water</div>
<div class="t" style="left:1801px;top:224px">Surcharge</div>
<div class="t" style="left:1801px;top:246px">Applied forces</div>
<div class="t" style="left:1801px;top:268px">Anchors</div>
<div class="t" style="left:1801px;top:290px">Supports</div>
<div class="t" style="left:1801px;top:312px">Props</div>
<div class="t" style="left:1801px;top:334px">Earthquake</div>
<div class="t" style="left:1801px;top:356px">Stage settings</div>
<div class="t" style="left:1801px;top:385px">Analysis</div>
<div class="t" style="left:1801px;top:407px">Internal stability</div>
<div class="t" style="left:1801px;top:429px">Exter. stability</div>
<div class="t" style="left:1801px;top:451px">Dimensioning</div>
<div class="t" style="left:1801px;top:473px">Anchors Verification</div>
<div class="t" style="left:1801px;top:495px">Walers</div>
<svg class="a" style="left:1778px;top:120px" width="22" height="400" viewBox="1778 120 22 400">
 <rect x="1784.5" y="128.5" width="11" height="14" fill="#222"/><rect x="1785.5" y="129.5" width="9" height="4" fill="#1a8a80"/><rect x="1785.5" y="133.5" width="9" height="4" fill="#f8c840"/><rect x="1785.5" y="137.5" width="9" height="4" fill="#20f0f0"/>
 <path d="M1785 160v4" stroke="#1a6ac8" stroke-width="1.6"/><path d="M1782.5 163.5h5l-2.5 2.5z" fill="#1a6ac8"/>
 <path d="M1782.8 168h7.5" stroke="#800000" stroke-width="2"/><path d="M1791 159v12.5" stroke="#333" stroke-width="1.6"/><path d="M1791.5 158.5h3.5" stroke="#800000" stroke-width="2"/>
 <rect x="1782.5" y="184.5" width="3" height="8" fill="#c8c8c8" stroke="#555" stroke-width=".8"/><path d="M1785.5 185.5l5-3h7" stroke="#800000" stroke-width="2" fill="none"/>
 <rect x="1782.5" y="204.5" width="3" height="11.5" fill="#c8c8c8" stroke="#555" stroke-width=".8"/><path d="M1786 204.5h12" stroke="#800000" stroke-width="1"/><rect x="1786" y="206" width="12" height="10" fill="#80b8ec"/><path d="M1788 208h3M1794 208h3" stroke="#1a5aa8" stroke-width="1.6"/>
 <rect x="1782.5" y="227.5" width="3" height="9.5" fill="#c8c8c8" stroke="#555" stroke-width=".8"/><path d="M1785.5 228.2h11.5" stroke="#800000" stroke-width="1.2"/><path d="M1785 227.5v-3h1.5v-1h1.5v1h1.5v-1h1.5v1h1.5v-1h1.5v1h1.5v-1h1.5v3z" fill="#1a5ac0"/>
 <path d="M1791 245v7" stroke="#1a6ac8" stroke-width="1.8"/><path d="M1788 250h6l-3 3.5z" fill="#1a6ac8"/><path d="M1787 257h10" stroke="#1a6ac8" stroke-width="1.8"/><path d="M1789 254l-4 3 4 3z" fill="#1a6ac8"/>
 <path d="M1787 269v13" stroke="#777" stroke-width="2"/><path d="M1787 269h5M1783 280h4" stroke="#800000" stroke-width="2"/><path d="M1783 273.7l14 4.8" stroke="#ff00ff" stroke-width="1.8"/><path d="M1783 271.5v5" stroke="#ff00ff" stroke-width="1.2"/>
 <path d="M1791 291v13" stroke="#777" stroke-width="2"/><path d="M1791 291h4M1785 300h5" stroke="#800000" stroke-width="2"/><path d="M1786.5 290.5l3.5 3-3.5 3z" fill="#c040e0" stroke="#1a6ae0" stroke-width="1"/>
 <path d="M1791 313v13" stroke="#777" stroke-width="2"/><path d="M1791 313h4M1785 322h5" stroke="#800000" stroke-width="2"/><path d="M1782.5 315h8M1782.5 312.5v5" stroke="#ff00ff" stroke-width="2"/>
 <rect x="1787" y="334.5" width="4.5" height="6.5" fill="#777" stroke="#333" stroke-width=".8"/><path d="M1782.5 341.5h14.5" stroke="#222" stroke-width="1"/><path d="M1783 343l2 2-2 2M1788 343l2 2-2 2M1793 343l2 2-2 2" stroke="#20d020" stroke-width="1.2" fill="none"/>
 <rect x="1782.5" y="360.5" width="7.5" height="9.5" fill="#f0c040" stroke="#222"/><rect x="1789.5" y="355.5" width="8" height="9.5" fill="#f0c040" stroke="#222"/><text x="1784" y="369" font-family="Liberation Sans" font-size="8" fill="#333">1</text><text x="1791" y="364" font-family="Liberation Sans" font-size="8" fill="#333">2</text>
 <path d="M1782 394.7h4" stroke="#800000" stroke-width="2"/><path d="M1786.5 385v14.5M1791.7 385v15" stroke="#222" stroke-width="1.2"/><path d="M1786.5 385.5h3" stroke="#800000" stroke-width="1.4"/><path d="M1791.7 385.5l4.8 10.5-2.5 3.8h-2.3z" fill="#f8c040" stroke="#d00000" stroke-width="1"/>
 <path d="M1782 415.2h4" stroke="#800000" stroke-width="2"/><path d="M1786.3 407.5h10.2l-1.9 9.5-8.3 3.3z" fill="#f8c040" stroke="#222" stroke-width="1"/><path d="M1787.6 409.4l8.3 7" stroke="#d00000" stroke-width="1.6"/>
 <path d="M1782.5 436.5c0 4 3 6.5 7 6.5s8-4 8-11.5h-7" fill="#fff" stroke="#c00000" stroke-width="2.2"/><rect x="1787.6" y="431" width="3" height="6" fill="#f8c040" stroke="#333" stroke-width=".6"/>
 <path d="M1782.5 455.5l7-6v13z" fill="#f8c040" stroke="#d00000" stroke-width="1"/><path d="M1789.5 449.5c3 0 5 1 4 4-1 2 0 4 2 7l-6 2z" fill="#f8c040" stroke="#d00000" stroke-width="1"/><path d="M1789.5 449v15" stroke="#222" stroke-width="1.2"/>
 <path d="M1782 481.2h4" stroke="#800000" stroke-width="2"/><path d="M1786.3 473.5h10.2l-1.9 9.5-8.3 3.3z" fill="#f8c040" stroke="#222" stroke-width="1"/><path d="M1787.6 475.4l8.3 7" stroke="#d00000" stroke-width="1.6"/>
 <path d="M1790.8 495v13.5" stroke="#222" stroke-width="1.3"/><path d="M1791 495.5h3.5M1788 497.5h3M1788 502.8h3M1783.5 506.6h7.3" stroke="#e02020" stroke-width="1.2"/>
</svg>
<!-- outputs -->
<div class="a" style="left:1774px;top:778px;width:143px;height:19px;background:#d0d0d0"></div>
<div class="t" style="left:1778px;top:780px">Outputs</div>
<div class="a" style="left:1903px;top:789px;width:7px;height:2px;background:#000"></div>
<div class="btn" style="left:1778px;top:801px;width:135px;height:22px"></div>
<svg class="a" style="left:1781px;top:803px" width="16" height="18" viewBox="0 0 16 18"><rect x="1.5" y="2.5" width="13" height="13" fill="#fff" stroke="#333"/><path d="M4 6v6h4M4 8h3" stroke="#333"/><path d="M11 3v6M8 6h6" stroke="#00a000" stroke-width="1.8"/></svg>
<div class="t" style="left:1801px;top:805px">Add Picture</div>
<div class="t" style="left:1778px;top:828px">Dimensioning :</div>
<div class="t" style="left:1905px;top:828px">0</div>
<div class="t" style="left:1778px;top:849px">Total :</div>
<div class="t" style="left:1905px;top:849px">0</div>
<div class="btn" style="left:1778px;top:868px;width:135px;height:22px"></div>
<svg class="a" style="left:1781px;top:870px" width="16" height="18" viewBox="0 0 16 18"><rect x="1.5" y="2.5" width="13" height="13" fill="#fff" stroke="#333"/><path d="M4 6v6h4M4 8h3M9 6h4M9 8h4M9 10h4" stroke="#333"/></svg>
<div class="t" style="left:1801px;top:872px">List of Pictures</div>
<div class="hl" style="left:1778px;top:896px;width:135px"></div>
<div class="btn" style="left:1778px;top:903px;width:135px;height:22px"></div>
<svg class="a" style="left:1781px;top:905px" width="16" height="18" viewBox="0 0 16 18"><rect x="1.5" y="2.5" width="13" height="13" fill="#fff" stroke="#333"/><path d="M1.5 5.5h13M1.5 8.5h13M1.5 11.5h13M5.5 2.5v13M10.5 2.5v13" stroke="#333"/></svg>
<div class="t" style="left:1801px;top:907px">List of Annexes</div>
<div class="btn" style="left:1778px;top:931px;width:65px;height:42px"></div>
<div class="btn" style="left:1848px;top:931px;width:65px;height:42px"></div>
<svg class="a" style="left:1797px;top:937px" width="28" height="30" viewBox="0 0 28 30"><rect x="7.5" y="1.5" width="13" height="9" fill="#fff" stroke="#333"/><rect x="1.5" y="8.5" width="25" height="12" rx="2" fill="#b09070" stroke="#333"/><rect x="6.5" y="15.5" width="15" height="13" fill="#fff" stroke="#333"/><path d="M9 19h10M9 22h10M9 25h10" stroke="#333"/></svg>
<svg class="a" style="left:1867px;top:937px" width="28" height="30" viewBox="0 0 28 30"><rect x="7.5" y="1.5" width="13" height="9" fill="#fff" stroke="#333"/><rect x="1.5" y="8.5" width="25" height="12" rx="2" fill="#b09070" stroke="#333"/><rect x="6.5" y="15.5" width="15" height="13" fill="#fff" stroke="#333"/><path d="M9 18h10l-3 8M9 18v8h3" stroke="#e02020" stroke-width="1.3" fill="none"/></svg>
<div class="btn" style="left:1778px;top:976px;width:135px;height:22px"></div>
<svg class="a" style="left:1781px;top:978px" width="16" height="18" viewBox="0 0 16 18"><rect x="1.5" y="1.5" width="9" height="9" fill="#fff" stroke="#333"/><path d="M3 4v4h3" stroke="#333"/><rect x="8.5" y="10.5" width="6" height="6" fill="#fff" stroke="#333"/><path d="M12 3v6l-2-2" stroke="#00a000" stroke-width="1.3" fill="none"/></svg>
<div class="t" style="left:1801px;top:980px">Copy view</div>

<!-- bottom panel -->
<div class="vt" style="left:3px;top:625px;width:20px;height:378px"><span>Dimensioning</span></div>
<div class="a" style="left:14px;top:633px;width:2px;height:5px;background:#000"></div>
<div class="t b" style="left:33px;top:642px;letter-spacing:-0.6px">Analysis :</div>
<div class="btn" style="left:87px;top:636px;width:23px;height:26px"></div>
<svg class="a" style="left:91px;top:641px" width="15" height="15" viewBox="0 0 15 15"><rect x="1.5" y="1.5" width="12" height="12" fill="#fff" stroke="#00a000" stroke-width="1.2"/><path d="M7.5 4v7M4 7.5h7" stroke="#008000" stroke-width="2"/></svg>
<div class="btn" style="left:115px;top:636px;width:23px;height:26px;background:#cccccc;border-color:#bfbfbf"></div>
<svg class="a" style="left:119px;top:641px" width="15" height="15" viewBox="0 0 15 15"><rect x="1.5" y="1.5" width="12" height="12" fill="#d6d6d6" stroke="#a0a0a0"/><path d="M4 7.5h7" stroke="#a0a0a0" stroke-width="1.6"/></svg>
<div class="sel" style="left:143px;top:636px;width:163px;height:26px;border-color:#1a5aa8"></div>
<div class="t" style="left:149px;top:642px">[1] - entire structure (8,00 m)</div>
<div class="hl" style="left:33px;top:671px;width:1676px"></div>
<div class="btn" style="left:1616px;top:636px;width:86px;height:26px"></div>
<svg class="a" style="left:1626px;top:640px" width="20" height="18" viewBox="0 0 20 18"><rect x="1.5" y="3.5" width="10" height="12" fill="#fff" stroke="#333"/><path d="M3 6h5M3 8h5M3 10h5M3 12h5" stroke="#333"/><circle cx="11" cy="6.5" r="4.5" fill="#a8d0f0" fill-opacity=".7" stroke="#333"/><path d="M14 10l4 4" stroke="#333" stroke-width="1.6"/></svg>
<div class="t" style="left:1647px;top:642px">In detail</div>
<div class="sel" style="left:1709px;top:636px;width:48px;height:26px;border-color:#1a5aa8"></div>
<svg class="a" style="left:1715px;top:642px" width="38" height="14" viewBox="0 0 38 14"><path d="M2 2h3v2.5h-3zM2 6h3v2.5h-3zM2 10h3v2.5h-3z" fill="#333"/><path d="M7 2h17v2.5h-17zM7 6h17v2.5h-17zM7 10h17v2.5h-17z" fill="#333"/><path d="M30 6h6l-3 3.5z" fill="#000"/></svg>

<div class="t" style="left:33px;top:684px">Name :</div>
<div class="inp" style="left:76px;top:681px;width:351px;height:20px;border-color:#a0a0a0"></div>
<div class="hl" style="left:33px;top:710px;width:394px"></div>
<div class="t" style="left:33px;top:723px;letter-spacing:-0.16px">Geometry : RC rectangular wall h = 0,30 m</div>
<div class="t" style="left:33px;top:749px">Stage :</div>
<div class="t" style="left:193px;top:749px;letter-spacing:-0.13px">(envelopes from all stages)</div>
<div class="btn" style="left:339px;top:744px;width:88px;height:22px"></div>
<svg class="a" style="left:352px;top:746px" width="18" height="18" viewBox="352 746 18 18">
 <g fill="#fff"><rect x="354" y="748" width="6" height="6"/><rect x="362" y="748" width="6" height="6"/><rect x="354" y="756" width="6" height="6"/><rect x="362" y="756" width="6" height="6"/></g>
 <path d="M354.7 754v-5.3h5.3M362.7 754v-5.3h5.3M354.7 762v-5.3h5.3M362.7 762v-5.3h5.3" stroke="#000" stroke-width="1.4" fill="none"/></svg>
<div class="t" style="left:372px;top:748px">Modify</div>
<div class="t" style="left:33px;top:776px">Partial factor on load :</div>
<div class="inp" style="left:193px;top:772px;width:141px;height:20px;border-color:#a0a0a0"></div>
<div class="t" style="left:305px;top:776px">1,00</div>
<div class="t" style="left:340px;top:776px">[–]</div>
<div class="inp" style="left:33px;top:798px;width:394px;height:131px;border-color:#a0a0a0"></div>
<div class="t" style="left:43px;top:807px">Max. displacement</div>
<div class="t" style="left:246px;top:807px">=</div>
<div class="t" style="left:267px;top:807px">-2,6</div>
<div class="t" style="left:293px;top:807px">mm</div>
<div class="t" style="left:43px;top:823px">Max. shear force on 1m of wall</div>
<div class="t" style="left:210px;top:823px">Q<sub style="font-size:10px;vertical-align:-3px">max</sub></div>
<div class="t" style="left:246px;top:823px">=</div>
<div class="t" style="left:260px;top:823px">29,54</div>
<div class="t" style="left:293px;top:823px">kN/m</div>
<div class="t" style="left:43px;top:841px">Max. moment on 1m of wall</div>
<div class="t" style="left:210px;top:841px">M<sub style="font-size:10px;vertical-align:-3px">max</sub></div>
<div class="t" style="left:246px;top:841px">=</div>
<div class="t" style="left:260px;top:841px">31,84</div>
<div class="t" style="left:293px;top:841px">kNm/m</div>

<div class="t" style="left:440px;top:684px">Verification &nbsp;:</div>
<div class="inp" style="left:511px;top:681px;width:111px;height:20px;border-color:#a0a0a0"></div>
<div class="t" style="left:514px;top:684px">entire structure</div>
<svg class="a" style="left:605px;top:688px" width="8" height="5"><path d="M0 0h8l-4 4.5z" fill="#000"/></svg>
<div class="hl" style="left:440px;top:714px;width:10px"></div>
<div class="t" style="left:454px;top:708px">Reinforcement</div>
<div class="hl" style="left:535px;top:714px;width:350px"></div>
<div class="t" style="left:440px;top:733px">Reinforcement :</div>
<div class="inp" style="left:529px;top:730px;width:139px;height:20px;border-color:#a0a0a0"></div>
<div class="t" style="left:532px;top:733px">Vertical reinforcement</div>
<svg class="a" style="left:654px;top:737px" width="8" height="5"><path d="M0 0h8l-4 4.5z" fill="#000"/></svg>
<div class="inp" style="left:682px;top:732px;width:14px;height:14px;border-color:#333"></div>
<div class="t" style="left:702px;top:733px">Shear reinforcement</div>
<div class="t" style="left:440px;top:759px">No. of bars :</div>
<div class="inp" style="left:509px;top:756px;width:61px;height:20px;border-color:#a0a0a0"></div>
<div class="t" style="left:541px;top:759px">6,00</div>
<div class="t" style="left:575px;top:759px">[pcs/m]</div>
<div class="t" style="left:440px;top:785px">Cover :</div>
<div class="inp" style="left:509px;top:782px;width:61px;height:20px;border-color:#a0a0a0"></div>
<div class="t" style="left:541px;top:785px">40,0</div>
<div class="t" style="left:575px;top:785px">[mm]</div>
<div class="t" style="left:440px;top:811px">Profile :</div>
<div class="inp" style="left:509px;top:808px;width:61px;height:20px;border-color:#a0a0a0"></div>
<div class="t" style="left:541px;top:811px">30,0</div>
<div class="t" style="left:575px;top:811px">[mm]</div>
<div class="t g" style="left:681px;top:756px">Profile :</div>
<div class="dis" style="left:750px;top:753px;width:88px;height:20px"></div>
<div class="t g" style="left:810px;top:756px">16,0</div>
<div class="t g" style="left:843px;top:756px">[mm]</div>
<div class="t g" style="left:681px;top:782px">No. of bars :</div>
<div class="dis" style="left:750px;top:779px;width:88px;height:20px"></div>
<div class="t g" style="left:807px;top:782px">2,00</div>
<div class="t g" style="left:843px;top:782px">[pcs/m]</div>
<div class="t g" style="left:681px;top:808px">Spacing :</div>
<div class="dis" style="left:750px;top:805px;width:88px;height:20px"></div>
<div class="t g" style="left:801px;top:808px">200,0</div>
<div class="t g" style="left:843px;top:808px">[mm]</div>
<div class="hl" style="left:440px;top:834px;width:445px"></div>
<div class="inp" style="left:441px;top:847px;width:14px;height:14px;border-color:#333"></div>
<div class="t" style="left:461px;top:847px">Check crack width</div>
<div class="t g" style="left:440px;top:871px">Allowable crack width :</div>
<div class="dis" style="left:567px;top:868px;width:88px;height:20px"></div>
<div class="t g" style="left:660px;top:871px">[mm]</div>
<div class="t g" style="left:440px;top:897px">Partial factor on load :</div>
<div class="dis" style="left:567px;top:894px;width:88px;height:20px"></div>
<div class="t g" style="left:660px;top:897px">[–]</div>

<div class="inp" style="left:899px;top:683px;width:14px;height:14px;border-color:#333"></div>
<svg class="a" style="left:901px;top:685px" width="10" height="10"><path d="M1.5 5l2.5 2.5 5-5" stroke="#000" stroke-width="1.4" fill="none"/></svg>
<div class="t" style="left:919px;top:684px">Check cross section</div>
<div class="hl" style="left:898px;top:709px;width:10px"></div>
<div class="t b" style="left:912px;top:703px;letter-spacing:-0.4px">Results</div>
<div class="hl" style="left:955px;top:709px;width:206px"></div>
<div class="t b" style="left:898px;top:726px;font-size:11px">SHEAR :</div>
<div class="t b" style="left:1021px;top:726px;color:#00a000;font-size:11px">SATISFACTORY</div>
<div class="t" style="right:759px;top:726px">(16,2%)</div>
<div class="t b" style="left:898px;top:747px;font-size:11px">BENDING :</div>
<div class="t b" style="left:1021px;top:747px;color:#e00000;font-size:11px">NOT OK.</div>
<div class="t" style="right:759px;top:747px">(1000,0%)</div>
<div class="t b" style="left:898px;top:768px;font-size:11px">DESIGN PRINCIPLES :</div>
<div class="t b" style="left:1021px;top:768px;color:#00a000;font-size:11px">SATISFACTORY</div>
<div class="t" style="right:759px;top:768px">(7,5%)</div>
<div class="hl" style="left:898px;top:794px;width:10px"></div>
<div class="t" style="left:912px;top:788px">Reinforcement area</div>
<div class="hl" style="left:1018px;top:794px;width:143px"></div>
<div class="t b" style="left:898px;top:812px">Required reinforcement area :</div>
<div class="t b" style="left:1079px;top:812px">318,5</div>
<div class="t b" style="left:1115px;top:813px">mm</div><div class="t b" style="left:1137px;top:809px;font-size:9px">2</div>
<div class="t b" style="left:898px;top:833px">Inputted reinforcement area :</div>
<div class="t b" style="left:1072px;top:833px">4241,2</div>
<div class="t b" style="left:1115px;top:834px">mm</div><div class="t b" style="left:1137px;top:830px;font-size:9px">2</div>

<div class="inp" style="left:1174px;top:681px;width:320px;height:313px;border-color:#a0a0a0;border-bottom:none"></div>
<svg class="a" style="left:1174px;top:681px" width="320" height="313" viewBox="1174 681 320 313">
 <path d="M1219 809.2h261.5v35l-3.5 3 7 3-3.5 2.5v34.5h-261.5v-34.5l3.5-2.5-7-3 3.5-3z" fill="#cccccc" stroke="#764a7c" stroke-width="2"/>
 <g fill="#a8d0e0" stroke="#000" stroke-width="2">
  <circle cx="1241.5" cy="823.5" r="3.6"/><circle cx="1285" cy="823.5" r="3.6"/><circle cx="1328" cy="823.5" r="3.6"/><circle cx="1372" cy="823.5" r="3.6"/><circle cx="1415" cy="823.5" r="3.6"/><circle cx="1458.5" cy="823.5" r="3.6"/>
  <circle cx="1241.5" cy="872.5" r="3.6"/><circle cx="1285" cy="872.5" r="3.6"/><circle cx="1328" cy="872.5" r="3.6"/><circle cx="1372" cy="872.5" r="3.6"/><circle cx="1415" cy="872.5" r="3.6"/><circle cx="1458.5" cy="872.5" r="3.6"/>
 </g>
 <path d="M1201.5 806v29M1201.5 847v44M1197 809.5h17M1197 887.5h17M1198 805l7 7M1198 883l7 7" stroke="#000" stroke-width="1" fill="none"/>
 <path d="M1482 682l-131 132M1241.5 823.5l142.5 142.5h110" stroke="#000" stroke-width="1" fill="none"/>
 <text x="1384" y="965" font-family="Liberation Sans" font-size="12" fill="#000" textLength="108" lengthAdjust="spacingAndGlyphs">6 prof. 30,0mm,cove</text>
 <text x="1189.5" y="845" font-family="Liberation Sans" font-size="11.5" fill="#000" textLength="21" lengthAdjust="spacingAndGlyphs">0,30</text>
</svg>

<!-- scrollbar -->
<div class="a" style="left:1740px;top:662px;width:17px;height:306px;background:#cdcdcd"></div>
<div class="a" style="left:1740px;top:976px;width:17px;height:17px;background:#f0f0f0;border:1px solid #d0d0d0"></div>
<svg class="a" style="left:1744px;top:982px" width="9" height="6"><path d="M0 0h9l-4.5 5z" fill="#606060"/></svg>

<!-- dropdown menu -->
<div class="a" style="left:1710px;top:662px;width:178px;height:54px;background:#f0f0f0;border:1px solid #a0a0a0;box-shadow:3px 3px 3px rgba(0,0,0,.4)"></div>
<div class="a" style="left:1713px;top:689px;width:172px;height:24px;background:#b8d6f4"></div>
<svg class="a" style="left:1716px;top:668px" width="16" height="42" viewBox="0 0 16 42">
 <g><rect x="1.5" y="1.5" width="13" height="13" fill="#fff" stroke="#333"/><rect x="2" y="2" width="12" height="3" fill="#7ab8ec"/><path d="M1.5 5h13M1.5 8h13M1.5 11h13M5.5 2v12.5M10 2v12.5" stroke="#333"/></g>
 <g transform="translate(0,24)"><rect x="1.5" y="1.5" width="13" height="13" fill="#fff" stroke="#333"/><rect x="2" y="2" width="12" height="3" fill="#7ab8ec"/><path d="M1.5 5h13M1.5 8h13M1.5 11h13M5.5 2v12.5M10 2v12.5" stroke="#333"/></g>
</svg>
<div class="t" style="left:1742px;top:670px">Export of internal force</div>
<div class="t" style="left:1742px;top:694px">Export FIN EC</div>
<!-- red highlight -->
<div class="a" style="left:1701px;top:626px;width:202px;height:105px;border:4px solid #e8161c"></div>
<svg class="a" style="left:1908px;top:1020px" width="12" height="12" viewBox="0 0 12 12"><g fill="#a0a0a0"><rect x="8" y="2" width="2" height="2"/><rect x="5" y="5" width="2" height="2"/><rect x="8" y="5" width="2" height="2"/><rect x="2" y="8" width="2" height="2"/><rect x="5" y="8" width="2" height="2"/><rect x="8" y="8" width="2" height="2"/></g></svg>
</body></html>
